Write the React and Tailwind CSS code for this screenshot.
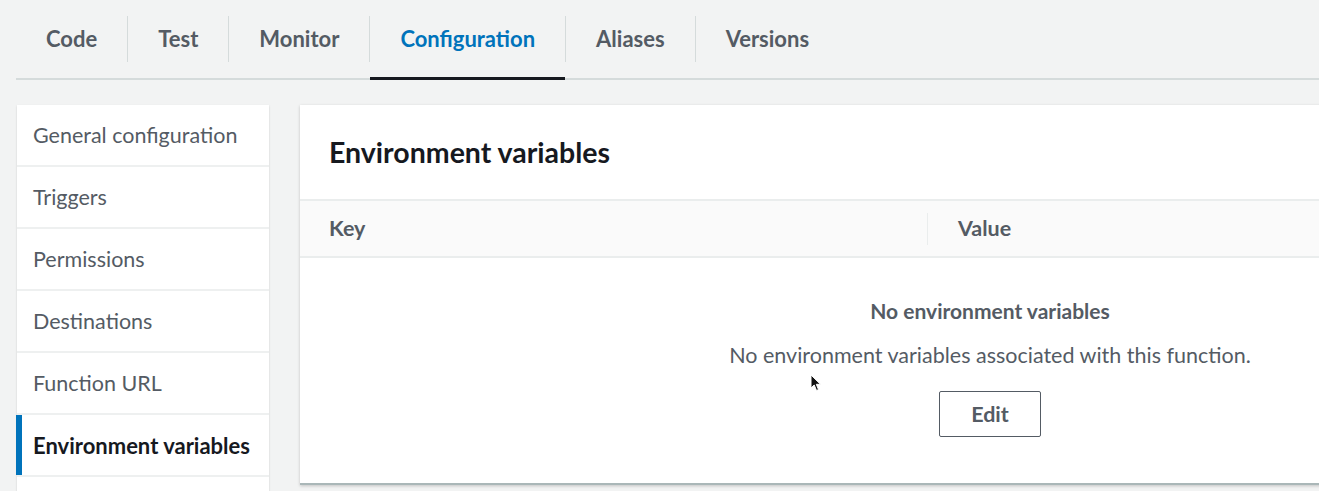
import React from 'react'

const tabs = ['Code', 'Test', 'Monitor', 'Configuration', 'Aliases', 'Versions']
const menu = ['General configuration', 'Triggers', 'Permissions', 'Destinations', 'Function URL', 'Environment variables']

const Cursor = () => (
    <svg className="absolute left-[810px] top-[374px]" width="12" height="18" viewBox="0 0 12 18">
        <path d="M1 1 L1 14 L4.2 11 L6.5 16.5 L8.5 15.6 L6.3 10.3 L10.5 10.3 Z" fill="#111" stroke="#fff" strokeWidth="1" />
    </svg>
)

const App = () => {
    return (
        <div className="relative w-[1319px] h-[491px] overflow-hidden bg-[#f2f3f3] font-['Lato',sans-serif]">
            <div className="ml-[16px] flex h-[80px] items-center border-b-2 border-[#d5dbdb]">
                {tabs.map((t, i) => (
                    <div key={t} className="flex h-full items-center">
                        {i > 0 && <div className="h-[46px] w-px bg-[#d5dbdb]" />}
                        <div className={`relative flex h-full items-center px-[30px] pb-[2px] text-[22px] font-bold ${t === 'Configuration' ? 'text-[#0073bb]' : 'text-[#545b64]'}`}>
                            {t}
                            {t === 'Configuration' && <div className="absolute bottom-[-2px] left-0 right-0 h-[3px] bg-[#16191f]" />}
                        </div>
                    </div>
                ))}
            </div>
            <div className="mt-[25px] flex gap-[31px] pl-[17px]">
                <div className="w-[252px] shrink-0 bg-white shadow-[0_1px_2px_rgba(0,0,0,0.15)]">
                    {menu.map((m) => {
                        const active = m === 'Environment variables'
                        return (
                            <div key={m} className={`relative flex h-[62px] items-center border-b-2 border-[#eef0f0] pl-[16px] ${active ? 'text-[22px] font-bold text-[#16191f]' : 'text-[21.5px] text-[#545b64]'}`}>
                                {active && <div className="absolute -left-px top-0 bottom-0 w-[6px] bg-[#0073bb]" />}
                                {m}
                            </div>
                        )
                    })}
                    <div className="h-[20px]" />
                </div>
                <div className="h-[380px] w-[1380px] shrink-0 border-b-2 border-[#aab7b8] bg-white shadow-[0_1px_3px_rgba(0,0,0,0.2)]">
                    <div className="flex h-[96px] items-center border-b-2 border-[#eaeded] px-[29px] text-[28.5px] font-bold text-[#16191f]">
                        Environment variables
                    </div>
                    <div className="flex h-[57px] items-center border-b-2 border-[#eaeded] bg-[#fafafa] text-[21.5px] font-bold text-[#545b64]">
                        <div className="w-[627px] pl-[29px]">Key</div>
                        <div className="h-[32px] w-px bg-[#eaeded]" />
                        <div className="pl-[30px]">Value</div>
                    </div>
                    <div className="flex flex-col items-center pt-[38px]">
                        <div className="text-[21px] font-bold leading-[30px] text-[#545b64]">No environment variables</div>
                        <div className="mt-[14px] text-[21.5px] leading-[30px] text-[#545b64]">No environment variables associated with this function.</div>
                        <button className="mt-[21px] h-[46px] w-[102px] rounded-[2px] border border-[#545b64] bg-white text-[21.5px] font-bold text-[#545b64]">Edit</button>
                    </div>
                </div>
            </div>
            <Cursor />
        </div>
    )
}

export default App
